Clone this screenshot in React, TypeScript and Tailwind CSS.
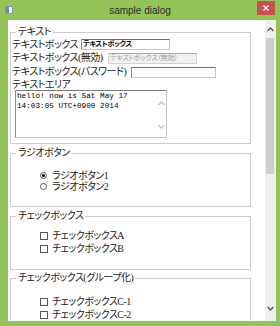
import React from 'react';

const jp = "font-['Liberation_Serif','Noto_Sans_CJK_JP',serif] [font-feature-settings:'palt']";

const GroupBox: React.FC<{ title: string; className?: string; children: React.ReactNode }> = ({ title, className, children }) => (
  <fieldset className={`ml-[2px] mr-[14px] border border-[#cdcdcd] shrink-0 ${className ?? ''}`}>
    <legend className="ml-[5px] px-[2px] leading-[12px] text-[10px] tracking-[-0.5px] text-[#1a1a1a]">{title}</legend>
    {children}
  </fieldset>
);

const Chevron: React.FC<{ down?: boolean; color: string }> = ({ down, color }) => (
  <svg width="7" height="5" viewBox="0 0 7 5" className="shrink-0">
    <path
      d={down ? 'M0.5 1 L3.5 4 L6.5 1' : 'M0.5 4 L3.5 1 L6.5 4'}
      fill="none"
      stroke={color}
      strokeWidth="1.3"
    />
  </svg>
);

const Radio: React.FC<{ checked?: boolean; label: string }> = ({ checked, label }) => (
  <div className="h-[11px] flex items-center pl-[29px] gap-[5px]">
    <div className="w-[7px] h-[7px] rounded-full border border-[#555] flex items-center justify-center shrink-0">
      {checked && <div className="w-[3px] h-[3px] rounded-full bg-black" />}
    </div>
    <span className="text-[10px] tracking-[-0.5px] leading-[11px] text-[#1a1a1a] whitespace-nowrap">{label}</span>
  </div>
);

const Check: React.FC<{ label: string }> = ({ label }) => (
  <div className="h-[13px] flex items-center pl-[29px] gap-[4px]">
    <div className="w-[8px] h-[8px] border border-[#555] shrink-0" />
    <span className="text-[10px] tracking-[-0.5px] leading-[13px] text-[#1a1a1a] whitespace-nowrap">{label}</span>
  </div>
);

export default function App() {
  return (
    <div className={`w-[280px] h-[326px] bg-[#93c45a] flex flex-col overflow-hidden ${jp}`}>
      {/* title bar */}
      <div className="h-[20px] shrink-0 grid grid-cols-[1fr_auto_1fr] items-center">
        <div className="ml-[5px] w-[8px] h-[8px] border border-[#8a9aa8] bg-white flex">
          <div className="w-[3px] bg-[#6a8fb0]" />
        </div>
        <span className="font-['Liberation_Sans',sans-serif] text-[10px] text-[#2e2e2e]">sample dialog</span>
        <div className="justify-self-end self-start mt-[1px] mr-[5px] w-[18px] h-[14px] bg-[#c75050] flex items-center justify-center">
          <svg width="6" height="6" viewBox="0 0 6 6">
            <path d="M0.5 0.5 L5.5 5.5 M5.5 0.5 L0.5 5.5" stroke="#fff" strokeWidth="1.4" />
          </svg>
        </div>
      </div>

      {/* client area */}
      <div className="flex-1 min-h-0 flex ml-[8px] mr-[4px] mb-[5px] bg-white">
        <div className="flex-1 min-w-0 overflow-hidden flex flex-col">
          <GroupBox title="テキスト" className="mt-[6px] pb-[5px]">
            <div className="pl-[1px] flex flex-col text-[10px] tracking-[-0.5px] text-[#1a1a1a]">
              <div className="h-[13px] flex items-center">
                <span className="w-[69px] shrink-0 whitespace-nowrap leading-[13px]">テキストボックス</span>
                <div className="w-[89px] h-[11px] border border-[#c4c4c4] border-t-[#6e6e6e] border-l-[#8a8a8a] bg-white flex items-center pl-[1px] overflow-hidden">
                  <span className="text-[7px] tracking-[-0.2px] leading-[9px] text-black whitespace-nowrap font-bold">テキストボックス</span>
                </div>
              </div>
              <div className="h-[14px] flex items-center">
                <span className="w-[96px] shrink-0 whitespace-nowrap leading-[14px]">テキストボックス(無効)</span>
                <div className="w-[89px] h-[11px] border border-[#d2d2d2] border-t-[#a8a8a8] bg-[#f0f0f0] flex items-center pl-[1px] overflow-hidden">
                  <span className="text-[7px] tracking-[-0.2px] leading-[9px] text-[#a0a0a0] whitespace-nowrap">テキストボックス（無効）</span>
                </div>
              </div>
              <div className="h-[14px] flex items-center">
                <span className="w-[119px] shrink-0 whitespace-nowrap leading-[14px]">テキストボックス(パスワード)</span>
                <div className="w-[85px] h-[11px] border border-[#c4c4c4] border-t-[#6e6e6e] border-l-[#8a8a8a] bg-white" />
              </div>
              <div className="h-[11px] flex items-center">
                <span className="whitespace-nowrap leading-[11px]">テキストエリア</span>
              </div>
              <div className="ml-[3px] w-[152px] h-[48px] border border-[#c4c4c4] border-t-[#7a7a7a] border-l-[#8a8a8a] bg-white flex tracking-normal">
                <div className="flex-1 pl-[1px] pt-[1px] font-['Liberation_Mono',monospace] text-[7.7px] leading-[9.5px] text-black whitespace-pre">
                  {'hello! now is Sat May 17\n14:03:05 UTC+0900 2014'}
                </div>
                <div className="w-[10px] flex flex-col items-center justify-between pt-[10px] pb-[8px]">
                  <Chevron color="#c2c2c2" />
                  <Chevron down color="#c2c2c2" />
                </div>
              </div>
            </div>
          </GroupBox>

          <GroupBox title="ラジオボタン" className="mt-[3px] pt-[11px] pb-[14px]">
            <Radio checked label="ラジオボタン1" />
            <Radio label="ラジオボタン2" />
          </GroupBox>

          <GroupBox title="チェックボックス" className="mt-[3px] pt-[7px] pb-[14px]">
            <Check label="チェックボックスA" />
            <Check label="チェックボックスB" />
          </GroupBox>

          <GroupBox title="チェックボックス(グループ化)" className="mt-[2px] pt-[11px] pb-[14px]">
            <Check label="チェックボックスC-1" />
            <Check label="チェックボックスC-2" />
            <Check label="チェックボックスC-3" />
          </GroupBox>
        </div>

        {/* scrollbar */}
        <div className="w-[11px] shrink-0 bg-[#f0f0f0] flex flex-col items-center pt-[7px] pb-[10px]">
          <Chevron color="#555" />
          <div className="mt-[6px] w-[8px] h-[136px] bg-[#cdcdcd] ml-[-1px]" />
          <div className="flex-1" />
          <Chevron down color="#555" />
        </div>
      </div>
    </div>
  );
}
